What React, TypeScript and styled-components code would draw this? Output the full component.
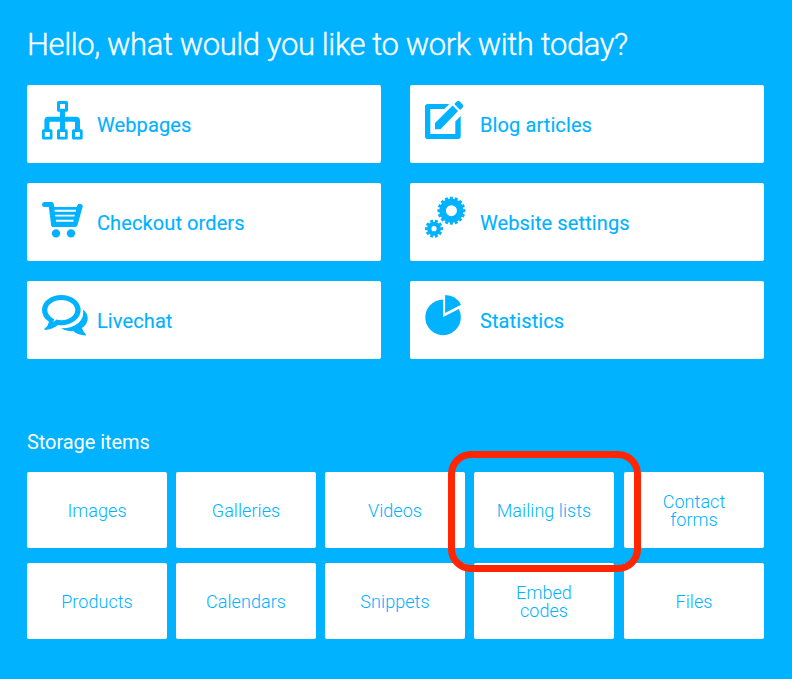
import React from 'react';
import styled, { createGlobalStyle } from 'styled-components';

const BLUE = '#00b2ff';

const GlobalStyle = createGlobalStyle`
  *, *::before, *::after { box-sizing: border-box; }
  body { margin: 0; background: ${BLUE}; }
`;

const Page = styled.main`
  min-height: 679px;
  padding: 25px 28px 40px 27px;
  background: ${BLUE};
  font-family: Roboto, sans-serif;
  color: ${BLUE};
`;

const Title = styled.h1`
  margin: 0 0 20px;
  height: 40px;
  line-height: 40px;
  font-size: 31px;
  font-weight: 300;
  letter-spacing: -0.39px;
  -webkit-text-stroke: 0.35px #fff;
  color: #fff;
  white-space: nowrap;
`;

const MainGrid = styled.nav`
  display: grid;
  grid-template-columns: repeat(2, 354px);
  grid-auto-rows: 78px;
  column-gap: 29px;
  row-gap: 20px;
`;

const MainCard = styled.a`
  display: flex;
  align-items: center;
  background: #fff;
  border-radius: 2px;
  font-size: 20px;
  font-weight: 400;
  line-height: 24px;
`;

const CardIcon = styled.svg`
  flex: none;
  width: 70px;
  height: 78px;
  fill: ${BLUE};
`;

const CardLabel = styled.span`
  padding-top: 2px;
  letter-spacing: 0.1px;
  -webkit-text-stroke: 0.15px ${BLUE};
`;

const StorageTitle = styled.h2`
  margin: 70px 0 18px;
  height: 25px;
  line-height: 26px;
  font-size: 20px;
  font-weight: 400;
  letter-spacing: -0.07px;
  color: #fff;
`;

const StorageGrid = styled.nav`
  display: grid;
  grid-template-columns: repeat(3, 140px) 141px 140px;
  grid-auto-rows: 76px;
  column-gap: 9px;
  row-gap: 15px;
`;

const StorageCard = styled.a`
  position: relative;
  display: flex;
  align-items: center;
  justify-content: center;
  width: 140px;
  padding: 2px 30px 0;
  background: #fff;
  border-radius: 2px;
  font-size: 18px;
  font-weight: 300;
  line-height: 18px;
  letter-spacing: 0.06px;
  text-align: center;
`;

const StorageLabel = styled.span<{ $wrap?: boolean }>`
  white-space: ${({ $wrap }) => ($wrap ? 'normal' : 'nowrap')};
`;

const Highlight = styled.span`
  position: absolute;
  z-index: 1;
  inset: -21px -27px -24px -26px;
  border: 7px solid #ff2600;
  border-radius: 23px;
  pointer-events: none;
`;

const SitemapIcon = () => (
  <CardIcon viewBox="0 0 70 78">
    <path
      fillRule="evenodd"
      d="M31.5 16h8q1.5 0 1.5 1.5v7.800q0 1.500-1.500 1.500H38v4.900h11q4 0 4 4v8.600h1.200q1.500 0 1.500 1.500v7.200q0 1.500-1.500 1.500h-7.700q-1.500 0-1.500-1.500v-7.200q0-1.500 1.500-1.500H48v-6.800q0-.8-.8-.8H38v7.600h1.200q1.500 0 1.500 1.500v7.200q0 1.500-1.500 1.500h-7.700q-1.500 0-1.500-1.500v-7.200q0-1.500 1.500-1.500H33v-7.600h-9.800q-.8 0-.8.8v6.800H24q1.500 0 1.500 1.500v7.200q0 1.500-1.500 1.500h-7.500q-1.500 0-1.500-1.500v-7.200q0-1.500 1.500-1.500h.9v-8.600q0-4 4-4H33v-4.900h-1.500q-1.500 0-1.500-1.500v-7.800Q30 16 31.500 16zM33 19v4.800h5V19zM17.800 47v4.800h5V47zM33 47v4.800h5V47zM48 47v4.800h5V47z"
    />
  </CardIcon>
);

const EditIcon = () => (
  <CardIcon viewBox="0 0 70 78">
    <path d="M39.300 19H17.800Q15 19 15 21.800v29.400Q15 54 17.800 54h30.100q2.800 0 2.800-2.800V31L45.300 36.400V49H20.300V24H34.300z" />
    <path d="M25 44.300v-6.200L42.600 20.600l5.400 5.400L30.500 44.300zM44.300 19l2.400-2.500q1.500-1.400 3 0l2.900 3q1.400 1.500 0 3l-2.500 2.400z" />
  </CardIcon>
);

const CartIcon = () => (
  <CardIcon viewBox="0 0 70 78">
    <path
      fillRule="evenodd"
      d="M17.300 19h7.500q1.500 0 1.800 1.500l.7 3.500h22.500l.6-1.800q.7-1.800 2.800-1.300 3 .5 2.500 2.700l-5.200 18.700q-.5 1.700-2.200 1.700H25.600q-1.200 0-1.400-1.500L21.800 24h-4.500q-2.300 0-2.300-2.500t2.300-2.500zM27.500 26.700l.2 2h21l.4-2zM28.200 31.700l.2 1.900h19l.4-1.900zM28.800 36.700l.2 2h17.300l.4-2z"
    />
    <circle cx="29" cy="50.400" r="4.200" />
    <circle cx="44" cy="50.400" r="4.200" />
  </CardIcon>
);

const Tooth = styled.circle`
  fill: none;
  stroke: ${BLUE};
  stroke-dasharray: 1.200 0.800;
`;

const Ring = styled.circle`
  fill: none;
  stroke: ${BLUE};
`;

const GearsIcon = () => (
  <CardIcon viewBox="0 0 70 78">
    <Ring cx="41.400" cy="27.700" r="8.800" strokeWidth="6.600" />
    <Tooth cx="41.400" cy="27.700" r="12.600" strokeWidth="2.800" pathLength="32" strokeDashoffset="0.600" />
    <Ring cx="24" cy="45.700" r="4.800" strokeWidth="4.400" />
    <Tooth cx="24" cy="45.700" r="7.800" strokeWidth="2.400" pathLength="20" strokeDashoffset="0.600" />
  </CardIcon>
);

const ChatIcon = () => (
  <CardIcon viewBox="0 0 70 78">
    <path
      fillRule="evenodd"
      d="M34.300 14C45 14 53.700 20.700 53.700 29S45 44.200 34.300 44.200q-1.800 0-3.400-.2-5.500 4.700-13 5-1-.3-.2-1.400Q21.200 45 22 40.800 15 36.300 15 29C15 20.700 23.600 14 34.300 14zM34.300 19C26.500 19 20.300 23.500 20.300 29q0 4.500 4.200 7.400l2.700 1.800-1 3 3.300-2.600q2.300.6 4.800.6C42 39.200 48.300 34.600 48.300 29S42 19 34.300 19z"
    />
    <path d="M56 28.500q4.700 3.700 4.700 9 0 5.500-5.700 9.500.8 3.500 3.600 6 1 1.100-.1 1.400-7 .1-12.300-4.300-7 .9-12.200-2.800 10.500.4 17.400-5.300 6-5.200 4.600-13.500z" />
  </CardIcon>
);

const PieIcon = () => (
  <CardIcon viewBox="0 0 70 78">
    <path d="M33.200 18.600V36l15.600-7.900A17.800 17.800 0 1 1 33.200 18.600z" />
    <path d="M35.100 14a18 18 0 0 1 15.900 9.800L35.100 32z" />
  </CardIcon>
);

const mainItems = [
  { label: 'Webpages', Icon: SitemapIcon },
  { label: 'Blog articles', Icon: EditIcon },
  { label: 'Checkout orders', Icon: CartIcon },
  { label: 'Website settings', Icon: GearsIcon },
  { label: 'Livechat', Icon: ChatIcon },
  { label: 'Statistics', Icon: PieIcon },
];

const storageItems = [
  { label: 'Images' },
  { label: 'Galleries' },
  { label: 'Videos' },
  { label: 'Mailing lists', highlighted: true },
  { label: 'Contact forms', wrap: true },
  { label: 'Products' },
  { label: 'Calendars' },
  { label: 'Snippets' },
  { label: 'Embed codes', wrap: true },
  { label: 'Files' },
];

export default function App() {
  return (
    <Page>
      <GlobalStyle />
      <Title>Hello, what would you like to work with today?</Title>
      <MainGrid>
        {mainItems.map(({ label, Icon }) => (
          <MainCard key={label}>
            <Icon />
            <CardLabel>{label}</CardLabel>
          </MainCard>
        ))}
      </MainGrid>
      <StorageTitle>Storage items</StorageTitle>
      <StorageGrid>
        {storageItems.map(({ label, highlighted, wrap }) => (
          <StorageCard key={label}>
            <StorageLabel $wrap={wrap}>{label}</StorageLabel>
            {highlighted && <Highlight />}
          </StorageCard>
        ))}
      </StorageGrid>
    </Page>
  );
}
